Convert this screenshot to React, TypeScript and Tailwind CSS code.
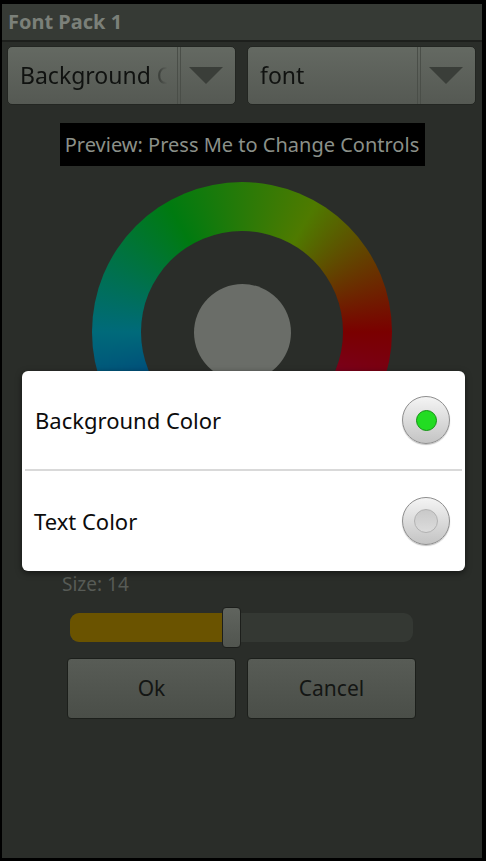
const font = { fontFamily: '"Noto Sans", "Open Sans", sans-serif' };

const Spinner = ({ label }: { label: string }) => (
  <div className="flex h-[59px] w-[229px] overflow-hidden rounded-[5px] border border-[#232622] bg-gradient-to-b from-[#646962] to-[#555953]">
    <div className="mr-[10px] flex min-w-0 flex-1 items-center overflow-hidden pl-[12px] [mask-image:linear-gradient(to_right,black_88%,transparent)]">
      <span className="whitespace-nowrap text-[23px] text-[#101210]">{label}</span>
    </div>
    <div className="flex w-[58px] items-center border-l-[4px] border-double border-[#4a4e48] pl-[8px]">
      <svg width="34" height="18" viewBox="0 0 34 18">
        <polygon points="0,0 34,0 17,17" fill="#3a3e39" />
      </svg>
    </div>
  </div>
);

const Radio = ({ checked }: { checked: boolean }) => (
  <div className="flex h-[48px] w-[48px] items-center justify-center rounded-full border border-[#8e8e8e] bg-gradient-to-b from-[#f4f4f4] to-[#c4c4c4] shadow-[0_1px_1px_rgba(0,0,0,0.25)]">
    {checked ? (
      <div className="h-[21px] w-[21px] rounded-full border border-[#139213] bg-[#22dc22]" />
    ) : (
      <div className="h-[24px] w-[24px] rounded-full border border-[#b2b2b2] bg-gradient-to-b from-[#c9c9c9] to-[#dcdcdc]" />
    )}
  </div>
);

export default function App() {
  return (
    <div className="relative h-[861px] w-[486px] overflow-hidden bg-black pb-[3px] pl-[2px] pr-[4px] pt-[4px]" style={font}>
      <div className="flex h-full flex-col bg-[#2a2d29]">
        {/* title */}
        <div className="flex h-[38px] items-center border-b-2 border-[#1d1f1c] bg-[#363a35] pl-[6px]">
          <span className="text-[20px] font-bold text-[#7b8079]">Font Pack 1</span>
        </div>

        {/* spinners */}
        <div className="mt-[4px] flex gap-[11px] pl-[5px]">
          <Spinner label="Background Color" />
          <Spinner label="font" />
        </div>

        {/* preview */}
        <div className="mt-[18px] flex justify-center">
          <div className="flex h-[43px] w-[365px] items-center justify-center bg-black">
            <span className="text-[20px] text-[#8b9089]">Preview: Press Me to Change Controls</span>
          </div>
        </div>

        {/* color wheel */}
        <div className="mt-[16px] flex justify-center">
          <div className="flex h-[300px] w-[300px] items-center justify-center rounded-full bg-[conic-gradient(from_90deg,#7a0000,#7a004a,#00207a,#006a7a,#007a10,#4f7a00,#7a0000)]">
            <div className="flex h-[202px] w-[202px] items-center justify-center rounded-full bg-[#2a2d29]">
              <div className="h-[97px] w-[97px] rounded-full bg-[#6a6d68]" />
            </div>
          </div>
        </div>

        {/* size */}
        <div className="mt-[89px] pl-[60px] text-[19px] leading-[26px] text-[#575b56]">Size: 14</div>

        {/* slider */}
        <div className="mt-[10px] flex h-[41px] items-center pl-[68px]">
          <div className="relative flex h-[29px] w-[343px] items-center rounded-[9px] bg-[#343833]">
            <div className="h-full w-[158px] rounded-l-[9px] bg-[#6a5300]" />
            <div className="absolute left-[152px] h-[41px] w-[19px] rounded-[4px] border border-[#1c1e1b] bg-gradient-to-b from-[#60645e] to-[#51554f]" />
          </div>
        </div>

        {/* buttons */}
        <div className="mt-[10px] flex gap-[11px] pl-[65px]">
          {["Ok", "Cancel"].map((t) => (
            <div
              key={t}
              className="flex h-[61px] w-[169px] items-center justify-center rounded-[4px] border border-[#1c1f1b] bg-gradient-to-b from-[#585c56] to-[#4a4e48]"
            >
              <span className="text-[21px] text-[#141614]">{t}</span>
            </div>
          ))}
        </div>
      </div>

      {/* dialog */}
      <div className="absolute left-[22px] top-[371px] w-[443px] rounded-[6px] bg-white shadow-[0_2px_6px_rgba(0,0,0,0.5)]">
        <div className="flex h-[98px] items-center justify-between pl-[13px] pr-[15px]">
          <span className="text-[22px] text-[#0c0c0c]">Background Color</span>
          <Radio checked />
        </div>
        <div className="mx-[3px] h-[2px] bg-[#d9d9d9]" />
        <div className="flex h-[100px] items-center justify-between pl-[12px] pr-[15px]">
          <span className="text-[22px] text-[#0c0c0c]">Text Color</span>
          <Radio checked={false} />
        </div>
      </div>
    </div>
  );
}
